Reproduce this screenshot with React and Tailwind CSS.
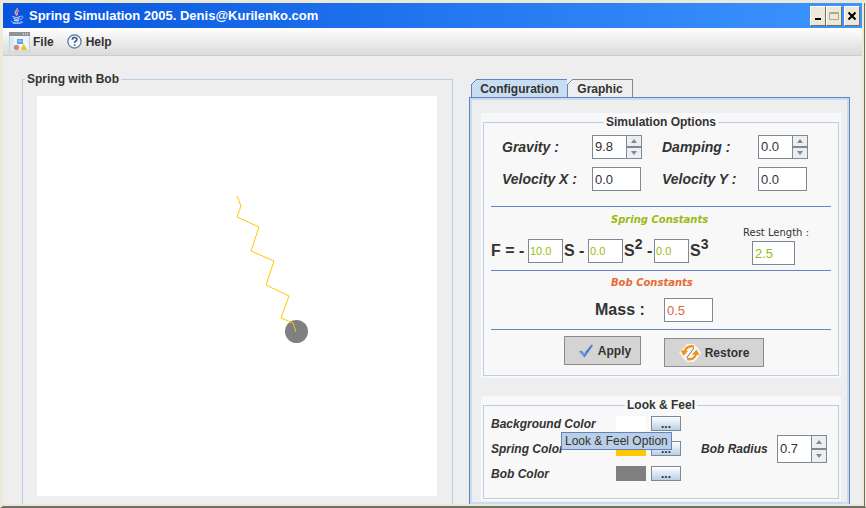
import { useState } from "react";

const SPRING_POINTS =
  "200,100 204,110 200,121 222,131 214,155 237,165 229,189 252,200 244,222 256,227 259,236";

const colorRows = [
  { label: "Background Color", swatch: "bg-white" },
  { label: "Spring Color", swatch: "bg-[#ffc800]" },
  { label: "Bob Color", swatch: "bg-[#808080]" },
];

function JavaIcon() {
  return (
    <svg className="h-4 w-4" viewBox="0 0 16 16" fill="none" aria-hidden="true">
      <path d="M8 0c1.500 2-3 3-1.500 5.500L8 7.500M10 2.500C7 4 8 5 8.500 7" stroke="#ff9d9d" strokeWidth="1.300" />
      <path d="M3.500 8.500c2 1 6 1 8 0M4.500 10.500c2 .8 4.500.8 6 0M5 12.300c1.500.6 4 .6 5 0" stroke="#dfe6ff" strokeWidth="1.100" />
      <path d="M12 8c3 0 2 3-1 3.500M2 13.500c3 1.800 8 1.800 11 0M4 15.500c4 .6 8 0 10-1.500" stroke="#a9b6f5" />
    </svg>
  );
}

function FileIcon() {
  return (
    <svg className="h-5 w-[21px]" viewBox="0 0 21 20" aria-hidden="true">
      <rect x=".5" y=".5" width="20" height="18.500" fill="#eef5fb" stroke="#c3ced6" />
      <rect width="21" height="4" fill="#8d9396" />
      <path d="M14 2h1M16 2h1M18 2h1" stroke="#fff" />
      <path d="M1 5h4v14H1z" fill="#d5ebf5" />
      <rect x="8" y="7" width="6" height="5" fill="#5fa2e2" />
      <path d="M9 9h4" stroke="#b8dcf8" />
      <circle cx="7.500" cy="15.500" r="2.700" fill="#d98a6a" />
      <path d="M14.500 11.500l4 6.500h-7z" fill="#f1c232" />
    </svg>
  );
}

function HelpIcon() {
  return (
    <svg className="h-[15px] w-[15px]" viewBox="0 0 15 15" fill="none" aria-hidden="true">
      <circle cx="7.500" cy="7.500" r="6.600" fill="#f7fafd" stroke="#4f7296" strokeWidth="1.200" />
      <path d="M5.300 5.800c0-3 4.600-3 4.600-.3 0 1.800-2.300 1.600-2.300 3.400M7.600 10.200v1.600" stroke="#345a85" strokeWidth="1.600" />
    </svg>
  );
}

function CheckIcon() {
  return (
    <svg className="h-[14px] w-[16px]" viewBox="0 0 16 14" aria-hidden="true">
      <path d="M1 7.500l2.500-1L6 9.500 13.500.5 15 1.500 6.500 13.500z" fill="#4b7bd0" />
      <path d="M2 7.500L5.700 11l2-2.500" stroke="#8fb2ec" fill="none" />
    </svg>
  );
}

function RestoreIcon() {
  return (
    <svg className="h-5 w-[22px]" viewBox="0 0 22 20" fill="none" aria-hidden="true">
      <path d="M8 1h7l3 3 4 6-4 6-4 3H8l-4-4-4-6 5-4z" fill="#f8f8f8" />
      <path d="M5.500 8.500C7 4.500 10 2.500 15 3.500" stroke="#ee9416" strokeWidth="2.400" />
      <path d="M1.500 7.500l7.500.5-4.500 5z" fill="#ee9416" />
      <path d="M17 11c-1 4-4.500 6-9 5" stroke="#ee9416" strokeWidth="2.400" />
      <path d="M20.500 12l-7.500-.5 4.500-5z" fill="#ee9416" />
      <path d="M7.500 15L15 5" stroke="#777" />
    </svg>
  );
}

function TitleBar() {
  const base =
    "flex h-5 w-4 items-center justify-center border border-t-white border-l-white border-r-[#716f64] border-b-[#716f64] bg-[#ece9d8]";
  return (
    <header className="flex h-[25px] items-center bg-linear-to-r from-[#0754df] to-[#3d95ff] pr-[2px] pl-[6px]">
      <JavaIcon />
      <h1 className="ml-1 flex-1 text-[13px] font-bold whitespace-nowrap text-white">
        Spring Simulation 2005. Denis@Kurilenko.com
      </h1>
      <button aria-label="Minimize" className={base}>
        <svg className="h-3 w-3 shrink-0" viewBox="0 0 12 12"><path d="M3 9h6" stroke="#000" strokeWidth="2" /></svg>
      </button>
      <button aria-label="Maximize" className={base}>
        <svg className="h-3 w-3 shrink-0" viewBox="0 0 12 12"><path d="M1.500 2.500h9v7h-9zM1 3.500h10" fill="none" stroke="#aca899" /></svg>
      </button>
      <button aria-label="Close" className={`${base} ml-[2px]`}>
        <svg className="h-3 w-3 shrink-0" viewBox="0 0 12 12"><path d="M2.500 2.500l7 7M9.500 2.500l-7 7" stroke="#000" strokeWidth="2" /></svg>
      </button>
    </header>
  );
}

function MenuBar() {
  return (
    <nav className="flex h-7 items-center border-b border-[#cccccc] bg-linear-to-b from-white to-[#dadada] pl-[6px] text-xs font-bold">
      <button className="flex items-center gap-[3px]">
        <FileIcon />
        File
      </button>
      <button className="ml-[13px] flex items-center gap-1">
        <HelpIcon />
        Help
      </button>
    </nav>
  );
}

function TextField({ id, label, value, className }) {
  return (
    <input
      id={id}
      aria-label={label}
      type="text"
      defaultValue={value}
      className={`h-6 border border-[#7a8a99] bg-white outline-none ${className}`}
    />
  );
}

function Spinner({ id, value, tall }) {
  const [current, setCurrent] = useState(value);
  const step = (delta) => setCurrent((Number(current) + delta).toFixed(1));
  const arrow =
    "flex flex-1 items-center justify-center border border-[#7a8a99] bg-[#eeeeee] text-[#7a8a99]";

  return (
    <div className={`flex w-[50px] ${tall ? "h-7" : "h-6"}`}>
      <input
        id={id}
        type="text"
        value={current}
        onChange={(e) => setCurrent(e.target.value)}
        className="w-[34px] border border-r-0 border-[#7a8a99] bg-white pl-[2px] text-[13px] outline-none"
      />
      <div className="flex w-4 flex-col">
        <button aria-label="Increase" onClick={() => step(0.1)} className={arrow}>
          <svg className="h-1 w-[6px]" viewBox="0 0 6 4"><path d="M3 0l3 4H0z" fill="currentColor" /></svg>
        </button>
        <button aria-label="Decrease" onClick={() => step(-0.1)} className={arrow}>
          <svg className="h-1 w-[6px]" viewBox="0 0 6 4"><path d="M0 0h6L3 4z" fill="currentColor" /></svg>
        </button>
      </div>
    </div>
  );
}

function Panel({ title, children }) {
  return (
    <div className="bg-[#f8f8f8] px-[2px] pt-px pb-[2px]">
      <fieldset className="border border-[#b8cfe5]">
        <legend className="mx-auto px-[2px] text-xs leading-4 font-bold">{title}</legend>
        {children}
      </fieldset>
    </div>
  );
}

function SimulationOptions() {
  const label = "text-sm font-bold italic whitespace-nowrap";
  const constant = "w-[35px] pl-px text-[11px] text-[#99bb11]";
  const heading = "pl-[120px] font-['DejaVu_Sans'] text-[10px] leading-4 font-bold italic";

  return (
    <Panel title="Simulation Options">
      <div className="px-[7px] pb-2">
        <div className="grid grid-cols-[90px_50px_116px_50px] items-center gap-y-2 pt-[5px] pb-[15px] pl-[11px]">
          <label htmlFor="gravity" className={label}>Gravity :</label>
          <Spinner id="gravity" value="9.8" />
          <label htmlFor="damping" className={`${label} pl-5`}>Damping :</label>
          <Spinner id="damping" value="0.0" />
          <label htmlFor="vx" className={label}>Velocity X :</label>
          <TextField id="vx" value="0.0" className="w-[49px] pl-[2px] text-[13px]" />
          <label htmlFor="vy" className={`${label} pl-5`}>Velocity Y :</label>
          <TextField id="vy" value="0.0" className="w-[49px] pl-[2px] text-[13px]" />
        </div>

        <hr className="border-[#6382bf]" />

        <div className="flex pt-[5px]">
          <div className="flex-1 pb-[7px]">
            <h3 className={`${heading} text-[#99bb11]`}>Spring Constants</h3>
            <div className="mt-[11px] flex h-6 items-center text-base font-bold">
              <span className="w-[37px] whitespace-nowrap">F = -</span>
              <TextField label="Linear constant" value="10.0" className={`${constant} font-normal`} />
              <span className="w-[25px] pl-px whitespace-nowrap">S -</span>
              <TextField label="Quadratic constant" value="0.0" className={`${constant} font-normal`} />
              <span className="w-[31px] pl-px whitespace-nowrap">
                S<sup className="text-sm leading-none">2</sup> -
              </span>
              <TextField label="Cubic constant" value="0.0" className={`${constant} font-normal`} />
              <span className="pl-px">
                S<sup className="text-sm leading-none">3</sup>
              </span>
            </div>
          </div>
          <div className="flex w-[88px] flex-col justify-end pb-[5px]">
            <label htmlFor="rest" className="font-['DejaVu_Sans'] text-[10px] leading-4 whitespace-nowrap">
              Rest Length :
            </label>
            <TextField id="rest" value="2.5" className="ml-[9px] w-[43px] pl-[2px] text-[13px] text-[#99bb11]" />
          </div>
        </div>

        <hr className="border-[#6382bf]" />

        <div className="pt-1 pb-[7px]">
          <h3 className={`${heading} text-[#e86a33]`}>Bob Constants</h3>
          <div className="mt-[7px] flex items-center pl-[104px]">
            <label htmlFor="mass" className="w-[69px] text-base leading-6 font-bold">Mass :</label>
            <TextField id="mass" value="0.5" className="w-[49px] pl-[2px] text-[13px] text-[#d8683c]" />
          </div>
        </div>

        <hr className="border-[#6382bf]" />

        <div className="flex items-end gap-[23px] pt-[6px] pl-[73px] text-xs font-bold">
          <button className="mb-[2px] flex h-[29px] w-[77px] items-center justify-center gap-1 border border-[#8b8b8b] bg-[#d4d4d4] pl-1">
            <CheckIcon />
            Apply
          </button>
          <button className="flex h-[29px] w-[100px] items-center justify-center gap-1 border border-[#8b8b8b] bg-[#d4d4d4]">
            <RestoreIcon />
            Restore
          </button>
        </div>
      </div>
    </Panel>
  );
}

function LookAndFeel() {
  return (
    <Panel title="Look & Feel">
      <div className="relative flex pt-[3px] pb-[17px] pl-[7px] text-xs font-bold italic">
        <div className="flex w-[190px] flex-col gap-[10px]">
          {colorRows.map((row) => (
            <div key={row.label} className="flex h-[15px] items-center">
              <span className="w-[125px] whitespace-nowrap">{row.label}</span>
              <span className={`h-[15px] w-[30px] ${row.swatch}`} />
              <button
                aria-label={`Choose ${row.label}`}
                className="ml-[5px] flex h-[15px] w-[30px] items-center justify-center border border-[#7a8a99] bg-linear-to-b from-white to-[#b8cfe5] leading-3 not-italic"
              >
                ...
              </button>
            </div>
          ))}
        </div>
        <div className="flex flex-1 items-center pl-5">
          <label htmlFor="radius" className="w-[76px] whitespace-nowrap">Bob Radius</label>
          <div className="font-normal not-italic">
            <Spinner id="radius" value="0.7" tall />
          </div>
        </div>
        <div
          role="tooltip"
          className="absolute top-[19px] left-[77px] border border-[#6382bf] bg-[#b8cfe5] px-[3px] leading-4 font-normal whitespace-nowrap not-italic"
        >
          Look &amp; Feel Option
        </div>
      </div>
    </Panel>
  );
}

function TabCorner({ fill }) {
  return (
    <svg className="absolute -top-px -left-px h-[6px] w-[6px]" viewBox="0 0 6 6" aria-hidden="true">
      <path d="M0 0h6L0 6z" fill="#eeeeee" />
      <path d="M0 6L6 0" stroke={fill} />
    </svg>
  );
}

function App() {
  const [tab, setTab] = useState("configuration");

  return (
    <div className="flex min-h-screen flex-col border-t-[3px] border-r border-b-2 border-l-[3px] border-t-[#ece9d8] border-r-[#ece9d8] border-b-[#716f64] border-l-[#ece9d8] bg-[#eeeeee] font-['Liberation_Sans',Arial,sans-serif] text-[#333333]">
      <div className="flex flex-1 flex-col border-r border-[#716f64]">
        <div className="flex flex-1 flex-col border-r-2 border-b-2 border-[#ece9d8]">
          <TitleBar />
          <MenuBar />

          <main className="flex flex-1 gap-4 pt-[15px] pr-3 pl-[19px]">
            <fieldset className="min-w-0 flex-1 border border-b-0 border-[#b8cfe5] pr-[15px] pb-[5px] pl-[14px]">
              <legend className="-ml-3 px-[2px] text-xs leading-4 font-bold">Spring with Bob</legend>
              <svg className="mt-[9px] block aspect-square w-full bg-white" viewBox="0 0 400 400" role="img" aria-label="Spring simulation">
                <circle cx="259.500" cy="235.500" r="11.500" fill="#808080" />
                <polyline points={SPRING_POINTS} fill="none" stroke="#ffc800" />
              </svg>
            </fieldset>

            <section className="flex w-[381px] shrink-0 flex-col pt-2">
              <div role="tablist" className="flex items-end pl-[2px] text-xs font-bold">
                <button
                  role="tab"
                  aria-selected={tab === "configuration"}
                  onClick={() => setTab("configuration")}
                  className="relative h-[18px] w-[97px] border border-b-0 border-[#6382bf] bg-[#c8ddf2]"
                >
                  <TabCorner fill="#6382bf" />
                  Configuration
                </button>
                <button
                  role="tab"
                  aria-selected={tab === "graphic"}
                  onClick={() => setTab("graphic")}
                  className="relative h-[18px] w-[65px] border border-b-0 border-l-0 border-[#7a8a99] bg-[#eeeeee]"
                >
                  <TabCorner fill="#7a8a99" />
                  Graphic
                </button>
              </div>

              <div role="tabpanel" className="flex flex-1 flex-col border border-b-0 border-[#6382bf]">
                <div className="flex flex-1 flex-col gap-[18px] border-2 border-[#c8ddf2] pt-[13px] pr-[6px] pl-[9px]">
                  <SimulationOptions />
                  <LookAndFeel />
                </div>
              </div>
            </section>
          </main>
        </div>
      </div>
    </div>
  );
}

export default App;
